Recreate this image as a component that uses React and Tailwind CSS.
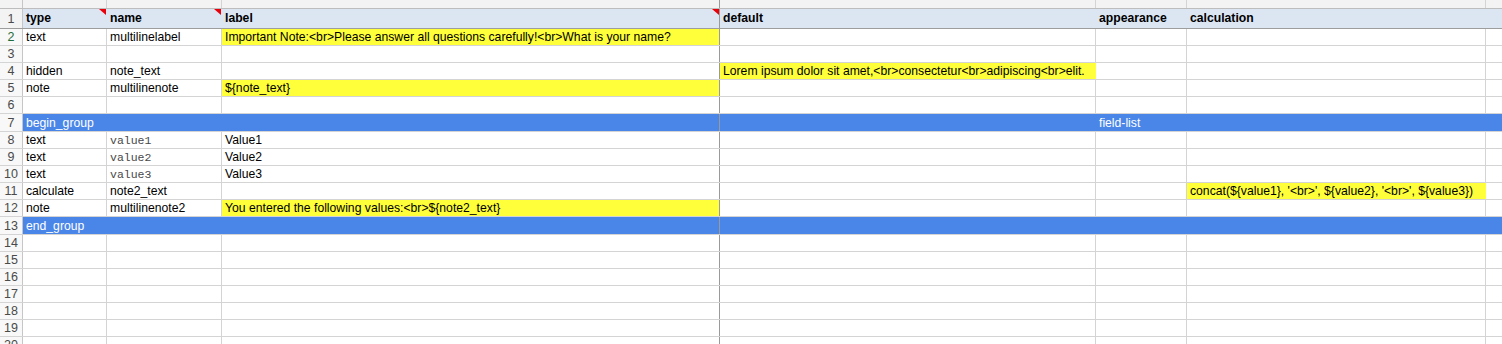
import React from "react";

const FONT = "font-['Liberation_Sans',Arial,sans-serif]";
const MONO = "font-['Liberation_Mono','Courier_New',monospace]";

// column widths (each includes its own 1px right gridline)
const WIDTHS = ["w-[84px]", "w-[115px]", "w-[498px]", "w-[376px]", "w-[91px]", "w-[299px]"];

const BLUE = "bg-[#4a86e8]";
const YELLOW = "bg-[#ffff3a]";

function Triangle() {
  return (
    <span className="absolute right-0 top-0 h-0 w-0 border-l-[7px] border-t-[6px] border-l-transparent border-t-[#e8000b]" />
  );
}

function Cell({ idx, children, yellow, blue, mono, bold, note, white }) {
  const dark = idx === 2;
  let right = "border-r-[#d4d4d4]";
  if (dark) right = "border-r-[#9a9a9a]";
  else if (blue) right = "border-r-[#4a86e8]";
  else if (yellow) right = "border-r-[#ffff3a]";
  const bg = blue ? BLUE : yellow ? YELLOW : "";
  return (
    <div
      className={`relative flex h-full shrink-0 items-center overflow-visible whitespace-nowrap border-r pl-[3px] pt-[1px] ${right} ${bg} ${WIDTHS[idx]} ${
        mono ? `${MONO} text-[11.5px] text-[#484848]` : "text-[12.2px]"
      } ${bold ? "font-bold" : ""} ${white ? "text-white" : mono ? "" : "text-black"}`}
    >
      <span className="relative z-10">{children}</span>
      {note && <Triangle />}
    </div>
  );
}

function RowNum({ n, active }) {
  return (
    <div
      className={`flex h-full w-[23px] shrink-0 items-center justify-center border-r border-r-[#c6c6c6] bg-[#f8f8f8] pt-[1px] text-[12.5px] ${
        active ? "text-[#1e6c3b]" : "text-[#4a4a4a]"
      }`}
    >
      {n}
    </div>
  );
}

function Row({ n, cells = [], blue, active, tall }) {
  return (
    <div className={`flex border-b border-b-[#d4d4d4] ${tall ? "h-[18px]" : "h-[17px]"}`}>
      <RowNum n={n} active={active} />
      {WIDTHS.map((_, i) => {
        const c = cells[i] || {};
        return (
          <Cell key={i} idx={i} blue={blue} white={blue} {...c}>
            {c.text}
          </Cell>
        );
      })}
      <div className={`h-full flex-1 ${blue ? BLUE : ""}`} />
    </div>
  );
}

const rows = [
  {
    n: 2,
    active: true,
    cells: [
      { text: "text" },
      { text: "multilinelabel" },
      { text: "Important Note:<br>Please answer all questions carefully!<br>What is your name?", yellow: true },
    ],
  },
  { n: 3 },
  {
    n: 4,
    cells: [
      { text: "hidden" },
      { text: "note_text" },
      {},
      { text: "Lorem ipsum dolor sit amet,<br>consectetur<br>adipiscing<br>elit.", yellow: true },
    ],
  },
  {
    n: 5,
    cells: [{ text: "note" }, { text: "multilinenote" }, { text: "${note_text}", yellow: true }],
  },
  { n: 6 },
  { n: 7, blue: true, tall: true, cells: [{ text: "begin_group" }, {}, {}, {}, { text: "field-list" }] },
  { n: 8, cells: [{ text: "text" }, { text: "value1", mono: true }, { text: "Value1" }] },
  { n: 9, cells: [{ text: "text" }, { text: "value2", mono: true }, { text: "Value2" }] },
  { n: 10, cells: [{ text: "text" }, { text: "value3", mono: true }, { text: "Value3" }] },
  {
    n: 11,
    cells: [
      { text: "calculate" },
      { text: "note2_text" },
      {},
      {},
      {},
      { text: "concat(${value1}, '<br>', ${value2}, '<br>', ${value3})", yellow: true },
    ],
  },
  {
    n: 12,
    cells: [
      { text: "note" },
      { text: "multilinenote2" },
      { text: "You entered the following values:<br>${note2_text}", yellow: true },
    ],
  },
  { n: 13, blue: true, tall: true, cells: [{ text: "end_group" }] },
  { n: 14 },
  { n: 15 },
  { n: 16 },
  { n: 17 },
  { n: 18 },
  { n: 19 },
  { n: 20 },
];

export default function App() {
  const headers = [
    { text: "type", note: true },
    { text: "name", note: true },
    { text: "label", note: true },
    { text: "default" },
    { text: "appearance" },
    { text: "calculation" },
  ];
  return (
    <div className={`h-[344px] w-[1502px] overflow-hidden bg-white ${FONT}`}>
      {/* column letter strip */}
      <div className="flex h-[9px] border-b border-b-[#bdbdbd] bg-[#f3f3f3]">
        <div className="h-full w-[23px] shrink-0 border-r border-r-[#c6c6c6]" />
        {WIDTHS.map((w, i) => (
          <div
            key={i}
            className={`h-full shrink-0 border-r ${w} ${i === 2 ? "border-r-[#9a9a9a]" : "border-r-[#d4d4d4]"}`}
          />
        ))}
        <div className="h-full flex-1" />
      </div>

      {/* header row */}
      <div className="flex h-[20px] border-b border-b-[#9d9d9d] bg-[#dce6f3]">
        <div className="flex h-full w-[23px] shrink-0 items-center justify-center border-r border-r-[#c6c6c6] bg-[#f3f3f3] pt-[2px] text-[12.5px] text-[#4a4a4a]">
          1
        </div>
        {headers.map((h, i) => (
          <div
            key={i}
            className={`relative flex h-full shrink-0 items-end whitespace-nowrap border-r pb-[1px] pl-[3px] text-[12.2px] font-bold text-black ${WIDTHS[i]} ${
              i === 2 ? "border-r-[#9a9a9a]" : "border-r-[#dce6f3]"
            }`}
          >
            {h.text}
            {h.note && <Triangle />}
          </div>
        ))}
        <div className="h-full flex-1" />
      </div>

      {rows.map((r) => (
        <Row key={r.n} {...r} />
      ))}
    </div>
  );
}
